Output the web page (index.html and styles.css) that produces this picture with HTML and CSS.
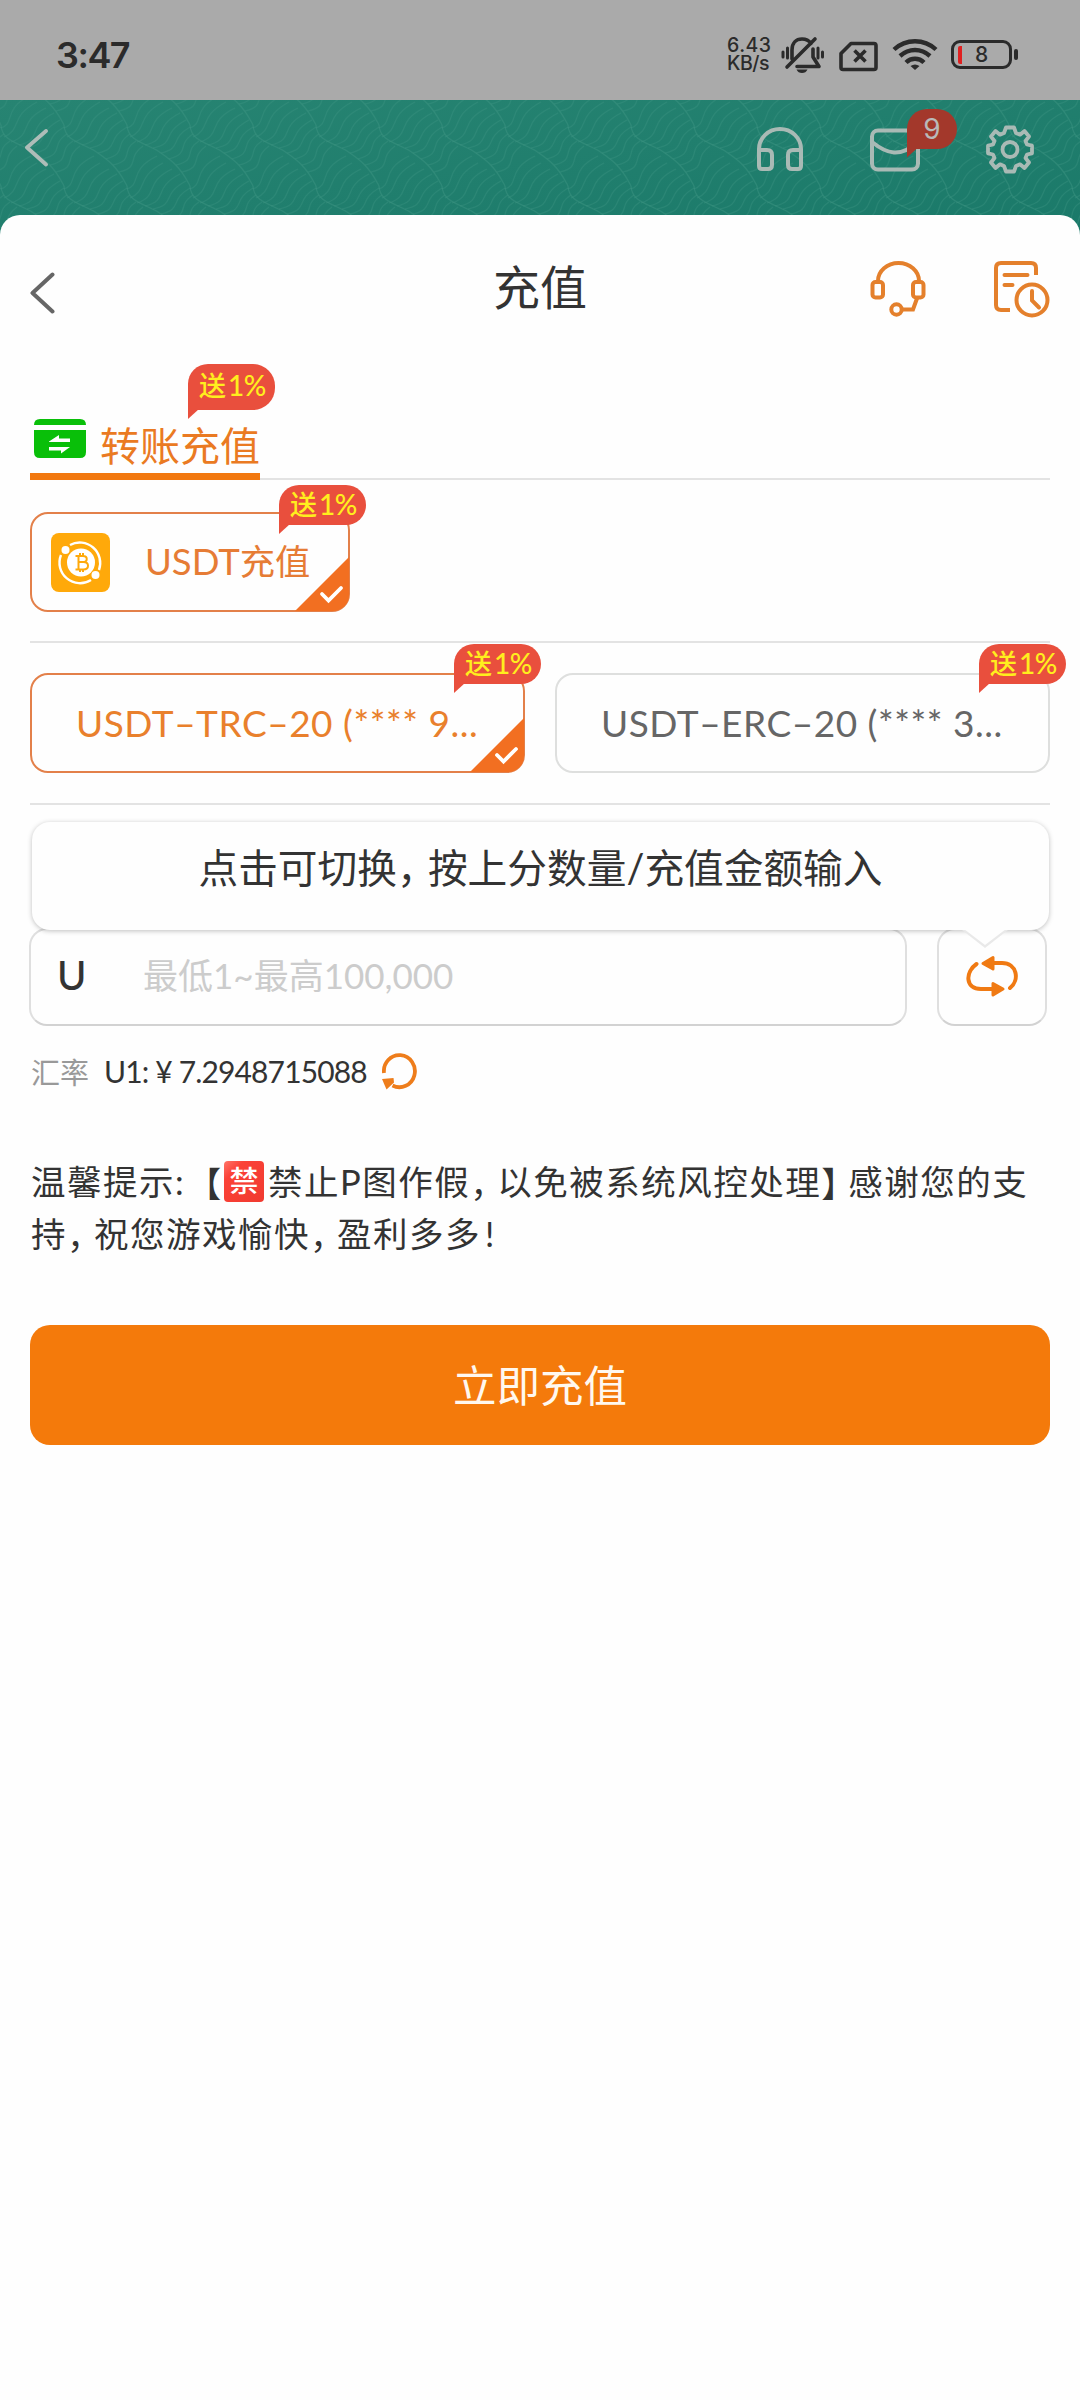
FILE: index.html
```html
<!DOCTYPE html>
<html lang="zh-CN">
<head>
<meta charset="utf-8">
<title>充值</title>
<link rel="stylesheet" href="styles.css">
</head>
<body>
<div class="status">
  <span class="clock">3:47</span>
  <div class="status-right">
    <span class="speed"><span>6.43</span><span>KB/s</span></span>
    <svg class="i-bell" width="44" height="38" viewBox="0 0 44 38" fill="none" stroke="#2b2b2b" stroke-width="3.6" stroke-linecap="round" stroke-linejoin="round">
      <path d="M6 31 34 3M11 23V14c0-7 4-11 10-11 4 0 7 1.500 9 4.500M32 13v8l6 9.500H16"/>
      <path d="M15.500 33.500h11c-1 2.500-3 3.500-5.500 3.500s-4.500-1-5.500-3.500z" fill="#2b2b2b" stroke="none"/>
      <path d="M2 16v5M6.500 12v10M37 12v10M41.500 16v5" stroke-width="3"/>
    </svg>
    <svg class="i-sim" width="39" height="31" viewBox="0 0 39 31" fill="none" stroke="#2b2b2b" stroke-width="3.600" stroke-linejoin="round">
      <path d="M12 2.500h23q2 0 2 2v22q0 2-2 2H4q-2 0-2-2V12.500z"/>
      <path d="m15.500 9.500 11 11m0-11-11 11"/>
    </svg>
    <svg class="i-wifi" width="46" height="34" viewBox="0 0 46 34" fill="none" stroke="#2b2b2b" stroke-width="4.400">
      <path d="M2 12.500c12-11 30-11 42 0M8 19c9-8 21-8 30 0M14 25.500c5-5 13-5 18 0"/>
      <path d="m23 33-4.500-4q4.500-3 9 0z" fill="#2b2b2b" stroke="none"/>
    </svg>
    <span class="battery"><i></i><b>8</b></span>
  </div>
</div>

<div class="app">
  <svg class="waves" width="1080" height="140" aria-hidden="true">
    <defs>
      <linearGradient id="bg" x1="0" y1="0" x2="1" y2="1"><stop offset="0" stop-color="#278472"/><stop offset="1" stop-color="#1a7969"/></linearGradient>
      <g id="cell" fill="none" stroke="#3c9381">
        <path d="M1 25C2 42 20 43 32 51S54 66 64 86" stroke-width="1.200" stroke-opacity=".5"/>
        <path stroke-width="1.200" stroke-opacity=".4" d="M1 28C16 23 2 9 31-5M4 37C23 28 9 17 37 2M11 42C34 34 17 22 46 8M19 45C44 39 25 28 54 13M27 48C51 43 34 34 60 20M35 53C57 48 43 39 64 27M43 59C65 53 50 45 67 34M50 65C72 60 57 51 73 41M56 72C78 67 63 58 80 46"/>
      </g>
      <pattern id="wave" width="63" height="61" patternUnits="userSpaceOnUse">
        <use href="#cell"/><use href="#cell" x="-63"/><use href="#cell" y="-61"/><use href="#cell" x="-63" y="-61"/><use href="#cell" y="61"/><use href="#cell" x="-63" y="61"/>
      </pattern>
    </defs>
    <rect width="1080" height="140" fill="url(#bg)"/>
    <rect width="1080" height="140" fill="url(#wave)"/>
  </svg>

  <div class="topbar">
    <svg width="24" height="38" viewBox="0 0 24 38" fill="none" stroke="#aebdb8" stroke-width="3.800" stroke-linecap="round" stroke-linejoin="round"><path d="M21 2 2 18.500l19 17"/></svg>
    <div class="top-icons">
      <svg width="48" height="46" viewBox="0 0 48 46" fill="none" stroke="#a9bab5" stroke-width="4" stroke-linejoin="round">
        <path d="M3 40V23a21 20 0 0 1 42 0v17q0 3-3 3h-6q-4 0-4-4V29q0-5 5-5h8M3 24h8q5 0 5 5v10q0 4-4 4H6q-3 0-3-3z"/>
      </svg>
      <div class="mail">
        <svg width="50" height="44" viewBox="0 0 50 44" fill="none" stroke="#a9bab5" stroke-width="4">
          <rect x="2" y="2.500" width="46" height="39" rx="6"/><path d="M2 14c15 12 28 16 46 0"/>
        </svg>
        <span class="badge badge-mail">9</span>
      </div>
      <svg width="48" height="49" viewBox="-24 -24.500 48 49" fill="none" stroke="#a9bab5" stroke-width="3.800" stroke-linejoin="round">
        <path d="M-4-22H4L6-16.500 10-14.800 14.500-18.500 19-13 15.500-8.500 17-5 22-3.800V3.800L17 5 15.500 8.500 19 13 14.500 18.500 10 14.800 6 16.500 4 22H-4L-6 16.500-10 14.800-14.500 18.500-19 13-15.500 8.500-17 5-22 3.800V-3.800L-17-5-15.500-8.500-19-13-14.500-18.500-10-14.800-6-16.500z"/>
        <circle r="7.500"/>
      </svg>
    </div>
  </div>

  <main class="sheet">
    <header class="sheet-head">
      <svg width="25" height="42" viewBox="0 0 25 42" fill="none" stroke="#666" stroke-width="4" stroke-linecap="round" stroke-linejoin="round"><path d="M22.500 2.500 2.500 21l20 18.500"/></svg>
      <h1>充值</h1>
      <div class="head-icons">
        <svg width="56" height="56" viewBox="0 0 56 56" fill="none" stroke="#e4802c" stroke-width="4">
          <path d="M8 20a20.500 18 0 0 1 41 0M47.500 36 43 48.500H32"/>
          <rect x="2.500" y="21" width="10.500" height="15.500" rx="3"/><rect x="43" y="21" width="10.500" height="15.500" rx="3"/>
          <circle cx="26.500" cy="48.500" r="5.200"/>
        </svg>
        <svg width="57" height="57" viewBox="0 0 57 57" fill="none" stroke="#e4802c" stroke-width="4">
          <path d="M17 49H8q-5 0-5-5V7q0-5 5-5h30q5 0 5 5v7"/><path d="M11.500 14h23M11.500 24h8" stroke-linecap="round"/>
          <circle cx="39" cy="39" r="15.500"/><path d="M39 30v9.500l7 7" stroke-linecap="round"/>
        </svg>
      </div>
    </header>

    <nav class="tabs">
      <div class="tab">
        <svg width="52" height="39" viewBox="0 0 52 39">
          <path d="M0 6Q0 0 6 0H46Q52 0 52 6ZM0 11H52V33Q52 39 46 39H6Q0 39 0 33Z" fill="#09bf09"/>
          <path d="M15 22.500 25 16v3.500h11v3.500H15zM36 28 27 34.500v-3H15V28z" fill="#fff"/>
        </svg>
        <span>转账充值</span>
        <span class="badge badge-tab">送<em>1%</em></span>
      </div>
    </nav>

    <section class="methods">
      <div class="card method on">
        <svg width="59" height="59" viewBox="0 0 59 59">
          <rect width="59" height="59" rx="8" fill="#ffa90a"/>
          <g fill="none" stroke="#fff" stroke-width="2.400"><path d="M19 12A20.500 20.500 0 0 1 48 37M10 22a20.500 20.500 0 0 0 30 25"/></g>
          <g fill="#fff"><circle cx="14.500" cy="17" r="4"/><circle cx="44.500" cy="42" r="4"/><circle cx="30" cy="29.500" r="14"/></g>
          <path d="M24.500 23h7.500c5 0 5 6 0 6h-4.500 5c6 0 6 7.500 0 7.500h-8M27.500 23v13.500M29 20v3M32 20v3M29 36.500V39M32 36.500V39" fill="none" stroke="#ffa90a" stroke-width="2"/>
        </svg>
        <span class="method-name"><em>USDT</em>充值</span>
        <svg class="tick" width="54" height="54" viewBox="0 0 54 54"><path d="M0 54 54 0V54z" fill="#f26f21"/><path d="m27 37 6.500 6.500L46 31" fill="none" stroke="#fff" stroke-width="3.800" stroke-linecap="round"/></svg>
        <span class="badge">送<em>1%</em></span>
      </div>
    </section>

    <section class="networks">
      <div class="card net on">
        <span class="net-name">USDT–TRC–20 (**** 9...</span>
        <svg class="tick" width="54" height="54" viewBox="0 0 54 54"><path d="M0 54 54 0V54z" fill="#f26f21"/><path d="m27 37 6.500 6.500L46 31" fill="none" stroke="#fff" stroke-width="3.800" stroke-linecap="round"/></svg>
        <span class="badge">送<em>1%</em></span>
      </div>
      <div class="card net">
        <span class="net-name">USDT–ERC–20 (**** 3...</span>
        <span class="badge">送<em>1%</em></span>
      </div>
    </section>

    <section class="amount">
      <div class="field"><span class="unit">U</span><span class="hint">最低<em>1~</em>最高<em>100,000</em></span></div>
      <div class="swap">
        <svg width="52" height="42" viewBox="0 0 52 42" fill="none" stroke="#f07a13" stroke-width="4" stroke-linecap="round" stroke-linejoin="round">
          <path d="M10.500 9C-1 17-1 34 15 34h12M25 8h11c15 0 18 17 8 25"/>
          <path d="M27 2.500V14L17 8.500zM27 28.500V40L37 34z" fill="#f07a13" stroke-width="3"/>
        </svg>
      </div>
      <div class="tip">点击可切换<i class="p">，</i>按上分数量<i class="slash">/</i>充值金额输入</div>
    </section>

    <div class="rate">
      <span class="rate-label">汇率</span>
      <span class="rate-value">U1: ¥ 7.2948715088</span>
      <svg width="35" height="37" viewBox="0 0 35 37"><path d="M2 20A15.500 16 0 1 1 10.500 32.500" fill="none" stroke="#ee7d1b" stroke-width="3.800"/><path d="M0 26 11.500 25 12 29.500 4.500 36.500z" fill="#ee7d1b"/></svg>
    </div>

    <p class="notice"><span>温馨提示<i class="colon">:</i><i class="open">【</i><b class="ban">禁</b>禁止<i class="lat">P</i>图作假<i class="p">，</i>以免被系统风控处理<i class="close">】</i>感谢您的支</span><span>持<i class="p">，</i>祝您游戏愉快<i class="p">，</i>盈利多多<i class="bang">!</i></span></p>

    <button class="submit">立即充值</button>
  </main>
</div>
</body>
</html>
```
FILE: styles.css
```css
* { box-sizing: border-box; }
body {
  margin: 0;
  width: 1080px;
  height: 2400px;
  overflow: hidden;
  font-family: Lato, "Noto Sans CJK SC", sans-serif;
  color: #333;
  background: #fefefe;
}
em, i { font-style: normal; }
svg { display: block; flex: none; }

.status {
  height: 100px;
  background: #aaa;
  display: flex;
  justify-content: space-between;
  align-items: flex-start;
  padding: 0 62px 0 56px;
  color: #2b2b2b;
}
.clock {
  font: 600 36px/50px Inter, sans-serif;
  margin-top: 30px;
  letter-spacing: -1.500px;
}
.status-right { display: flex; align-items: flex-start; }
.speed {
  width: 54px;
  margin-top: 37px;
  display: flex;
  flex-direction: column;
  font: 500 19.500px/17.500px Inter, sans-serif;
  white-space: nowrap;
}
.speed span:first-child { letter-spacing: .5px; }
.speed span:last-child { letter-spacing: -.5px; }
.i-bell { margin-top: 36px; }
.i-sim { margin: 40.500px 0 0 14px; }
.i-wifi { margin: 37px 0 0 14px; }
.battery {
  position: relative;
  width: 61px;
  height: 29px;
  margin: 40px 6px 0 13px;
  border: 3px solid #2b2b2b;
  border-radius: 9px;
  display: flex;
  align-items: center;
  justify-content: center;
  font: 21px/23px Inter, sans-serif;
}
.battery b { font-weight: 500; }
.battery i {
  position: absolute;
  left: 4px;
  top: 3px;
  width: 4px;
  height: 18px;
  border-radius: 2px 0 0 2px;
  background: #e02020;
}
.battery::after {
  content: "";
  position: absolute;
  right: -9px;
  top: 6px;
  width: 4px;
  height: 11px;
  border-radius: 2px;
  background: #2b2b2b;
}

.app { position: relative; }
.waves { position: absolute; left: 0; top: 0; z-index: -1; }
.topbar {
  height: 115px;
  display: flex;
  justify-content: space-between;
  align-items: flex-start;
  padding: 0 46px 0 25px;
}
.topbar > svg { margin-top: 29px; }
.top-icons { display: flex; align-items: center; margin-top: 25px; }
.top-icons > svg:first-child { margin-top: -2px; }
.mail { position: relative; margin: 0 66px; }

.badge {
  position: absolute;
  right: -18px;
  top: -29px;
  width: 87px;
  height: 40px;
  padding-left: 11px;
  border-radius: 20px 20px 20px 0;
  background: #e94f3d;
  color: #ffee1e;
  font-size: 27px;
  font-weight: 500;
  line-height: 38px;
  white-space: nowrap;
}
.badge em { font-size: 28px; letter-spacing: -.6px; margin-left: 2px; }
.badge::after {
  content: "";
  position: absolute;
  left: 0;
  top: 100%;
  width: 11px;
  height: 10px;
  margin-top: -1px;
  background: inherit;
  clip-path: polygon(0 0, 100% 0, 0 100%);
}
.networks .badge { top: -32px; }
.badge.badge-tab { right: -15px; top: 1px; height: 46px; line-height: 43px; border-radius: 20px 22px 22px 0; }
.badge.badge-mail {
  right: -37px;
  top: -19px;
  width: 50px;
  padding: 0;
  text-align: center;
  color: #b9b9b9;
  background: #a3382b;
  font: 28px/41px Inter, sans-serif;
}

.sheet {
  height: 2185px;
  padding: 0 30px;
  background: #fefefe;
  border-radius: 20px 20px 0 0;
}
.sheet-head {
  height: 148px;
  display: grid;
  grid-template-columns: 1fr auto 1fr;
  align-items: center;
}
.sheet-head > svg { margin: 7px 0 0; }
h1 { margin: -4px 0 0; font-size: 47px; font-weight: 400; line-height: 60px; color: #333; }
.head-icons { display: flex; justify-content: flex-end; gap: 67px; margin-top: 1px; }

.tabs { height: 117px; box-shadow: inset 0 -2px #e3e3e3; }
.tab {
  position: relative;
  width: 230px;
  height: 117px;
  padding: 56px 0 0 4px;
  border-bottom: 7px solid #f2780f;
  display: flex;
  align-items: flex-start;
  gap: 14px;
  color: #ea7a22;
  font-size: 40px;
  line-height: 54px;
  white-space: nowrap;
}

.methods { height: 163px; padding-top: 32px; border-bottom: 2px solid #e3e3e3; }
.card {
  position: relative;
  border: 2px solid #dedfde;
  border-radius: 18px;
  display: flex;
  align-items: center;
  white-space: nowrap;
  color: #666;
}
.card.on { border-color: #e3804a; color: #e9802c; }
.method { width: 320px; height: 100px; padding-left: 19px; }
.method-name { margin: -2px 0 0 35px; font-size: 35.300px; line-height: 50px; color: #e67c35; }
.method-name em { font-size: 36.500px; }
.tick { position: absolute; right: -1px; bottom: -1px; border-bottom-right-radius: 16px; }
.networks {
  height: 162px;
  padding-top: 30px;
  border-bottom: 2px solid #e3e3e3;
  display: grid;
  grid-template-columns: 1fr 1fr;
  gap: 30px;
}
.net { height: 100px; padding-left: 44px; font-size: 37px; }
.net-name { margin-top: -1px; letter-spacing: .52px; }
.networks .badge { top: -31px; }

.amount { position: relative; height: 221px; padding: 123px 3px 0 0; display: flex; justify-content: space-between; }
.field, .swap { height: 98px; border: 2px solid #dfdfdf; border-bottom-color: #d2d2d2; border-radius: 18px; display: flex; align-items: center; }
.field { width: 878px; margin-left: -1px; padding: 0 0 4px 26px; }
.unit { width: 86px; font-size: 40px; font-weight: 500; }
.hint { color: #ccc; font-size: 35px; line-height: 50px; white-space: nowrap; }
.swap { width: 110px; justify-content: center; padding-bottom: 3px; }
.tip {
  position: absolute;
  left: 2px;
  right: 1px;
  top: 17px;
  height: 108px;
  border-radius: 18px;
  background: #fefefe;
  box-shadow: 0 1px 5px rgba(0, 0, 0, .25);
  text-align: center;
  font-size: 39.700px;
  line-height: 92px;
  white-space: nowrap;
}
.tip::after {
  content: "";
  position: absolute;
  left: 932px;
  top: 107px;
  width: 42px;
  height: 16px;
  background: #fefefe;
  clip-path: polygon(0 0, 100% 0, 50% 100%);
}
.tip::before {
  content: "";
  position: absolute;
  left: 930px;
  top: 108px;
  width: 46px;
  height: 18px;
  background: #e9e9e9;
  clip-path: polygon(0 0, 100% 0, 50% 100%);
}
.p, .open, .close {
  display: inline-block;
  font-family: "Noto Sans CJK SC", sans-serif;
  font-feature-settings: "halt";
  line-height: 1;
  text-align: left;
}
.tip .p { width: 31px; }
.slash { display: inline-block; width: 18px; }

.rate { height: 92px; display: flex; align-items: center; padding: 0 0 2px 1px; font-size: 29px; white-space: nowrap; }
.rate-label { width: 73px; color: #999; }
.rate-value { width: 278px; font-size: 30px; letter-spacing: -.85px; }

.notice { margin: 38px 0 0; padding-left: 1px; height: 104px; font-size: 34.500px; line-height: 52px; letter-spacing: 1.500px; white-space: nowrap; }
.notice > span { display: flex; align-items: center; height: 52px; }
.notice .p { width: 27px; }
.colon { width: 13px; }
.open { width: 36px; padding-left: 16px; }
.close { width: 27px; }
.bang { padding-left: 4px; }
.ban {
  width: 40px;
  height: 41px;
  margin: -2px 4px 0 0;
  border-radius: 4px;
  background: linear-gradient(135deg, #ff7468 0, #fb4237 25%, #f03a30 100%);
  color: #fff;
  text-align: center;
  font-size: 29px;
  font-weight: 500;
  line-height: 40px;
  letter-spacing: 0;
}

.submit {
  display: block;
  width: 1020px;
  height: 120px;
  margin-top: 65px;
  padding: 0;
  border: 0;
  border-radius: 20px;
  background: #f47a0b;
  color: #fff8ef;
  font: 43.500px/118px Lato, "Noto Sans CJK SC", sans-serif;
}
```
